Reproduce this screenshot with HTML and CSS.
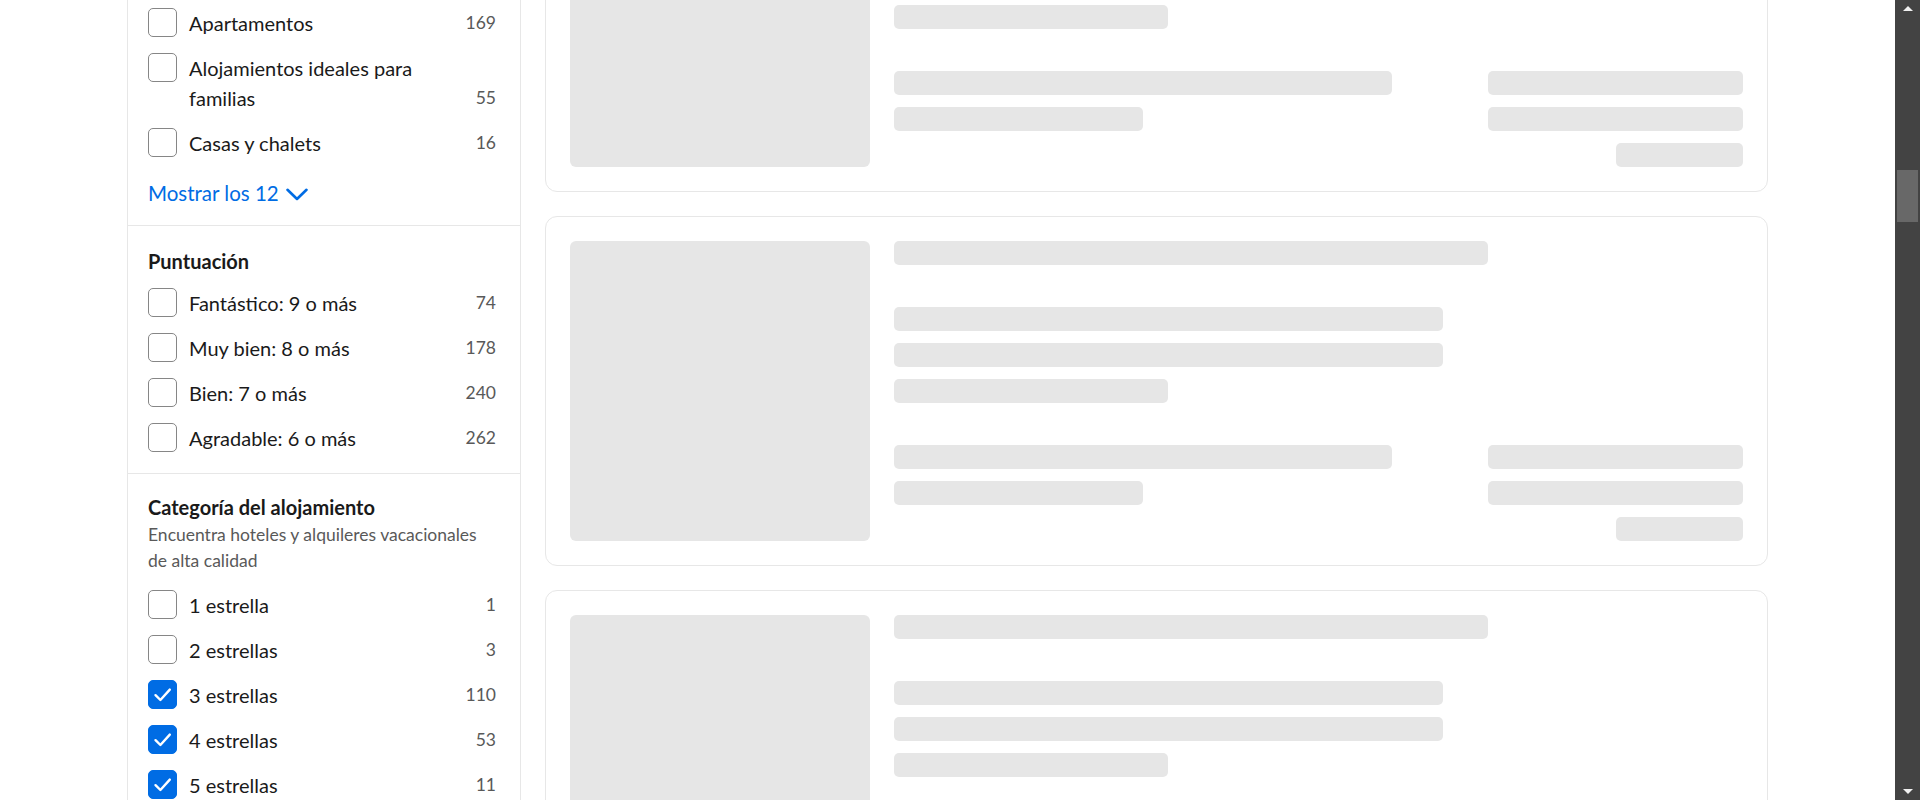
FILE: index.html
```html
<!DOCTYPE html>
<html lang="es">

<head>
    <meta charset="UTF-8">
    <meta name="viewport" content="width=device-width, initial-scale=1.0">
    <title>Resultados</title>
    <link rel="stylesheet" href="styles.css">
</head>

<body>
    <div class="page">
        <div class="viewport">
            <div class="layout">
                <!-- filtros -->
                <aside class="filters">
                    <section class="group group-first">
                        <ul class="options">
                            <li class="option">
                                <span class="box"></span>
                                <span class="label">Apartamentos</span>
                                <span class="count">169</span>
                            </li>
                            <li class="option">
                                <span class="box"></span>
                                <span class="label">Alojamientos ideales para familias</span>
                                <span class="count">55</span>
                            </li>
                            <li class="option">
                                <span class="box"></span>
                                <span class="label">Casas y chalets</span>
                                <span class="count">16</span>
                            </li>
                        </ul>
                        <button class="more">
                            Mostrar los 12
                            <svg width="22" height="13" viewBox="0 0 22 13">
                                <path d="M1.5 1.8 L11 11 L20.5 1.8" fill="none" stroke="#006ce4" stroke-width="2.6" stroke-linecap="round" stroke-linejoin="round" />
                            </svg>
                        </button>
                    </section>

                    <section class="group">
                        <h3 class="title">Puntuación</h3>
                        <ul class="options">
                            <li class="option">
                                <span class="box"></span>
                                <span class="label">Fantástico: 9 o más</span>
                                <span class="count">74</span>
                            </li>
                            <li class="option">
                                <span class="box"></span>
                                <span class="label">Muy bien: 8 o más</span>
                                <span class="count">178</span>
                            </li>
                            <li class="option">
                                <span class="box"></span>
                                <span class="label">Bien: 7 o más</span>
                                <span class="count">240</span>
                            </li>
                            <li class="option">
                                <span class="box"></span>
                                <span class="label">Agradable: 6 o más</span>
                                <span class="count">262</span>
                            </li>
                        </ul>
                    </section>

                    <section class="group group-category">
                        <h3 class="title">Categoría del alojamiento</h3>
                        <p class="hint">Encuentra hoteles y alquileres vacacionales de alta calidad</p>
                        <ul class="options">
                            <li class="option">
                                <span class="box"></span>
                                <span class="label">1 estrella</span>
                                <span class="count">1</span>
                            </li>
                            <li class="option">
                                <span class="box"></span>
                                <span class="label">2 estrellas</span>
                                <span class="count">3</span>
                            </li>
                            <li class="option">
                                <span class="box checked">
                                    <svg width="29" height="29" viewBox="0 0 29 29"><path d="M7.5 15.2 L12.4 20 L21.8 9.6" fill="none" stroke="#fff" stroke-width="2.4" stroke-linecap="round" stroke-linejoin="round" /></svg>
                                </span>
                                <span class="label">3 estrellas</span>
                                <span class="count">110</span>
                            </li>
                            <li class="option">
                                <span class="box checked">
                                    <svg width="29" height="29" viewBox="0 0 29 29"><path d="M7.5 15.2 L12.4 20 L21.8 9.6" fill="none" stroke="#fff" stroke-width="2.4" stroke-linecap="round" stroke-linejoin="round" /></svg>
                                </span>
                                <span class="label">4 estrellas</span>
                                <span class="count">53</span>
                            </li>
                            <li class="option">
                                <span class="box checked">
                                    <svg width="29" height="29" viewBox="0 0 29 29"><path d="M7.5 15.2 L12.4 20 L21.8 9.6" fill="none" stroke="#fff" stroke-width="2.4" stroke-linecap="round" stroke-linejoin="round" /></svg>
                                </span>
                                <span class="label">5 estrellas</span>
                                <span class="count">11</span>
                            </li>
                        </ul>
                    </section>
                </aside>

                <!-- resultados cargando -->
                <main class="results">
                    <div class="card">
                        <div class="photo"></div>
                        <div class="info">
                            <div class="line w-title"></div>
                            <div class="stack">
                                <div class="line w-mid"></div>
                                <div class="line w-mid"></div>
                                <div class="line w-short"></div>
                            </div>
                            <div class="bottom">
                                <div class="stack">
                                    <div class="line w-left"></div>
                                    <div class="line w-left-sm"></div>
                                </div>
                                <div class="stack price">
                                    <div class="line w-price"></div>
                                    <div class="line w-price"></div>
                                    <div class="line w-price-sm"></div>
                                </div>
                            </div>
                        </div>
                    </div>
                    <div class="card">
                        <div class="photo"></div>
                        <div class="info">
                            <div class="line w-title"></div>
                            <div class="stack">
                                <div class="line w-mid"></div>
                                <div class="line w-mid"></div>
                                <div class="line w-short"></div>
                            </div>
                            <div class="bottom">
                                <div class="stack">
                                    <div class="line w-left"></div>
                                    <div class="line w-left-sm"></div>
                                </div>
                                <div class="stack price">
                                    <div class="line w-price"></div>
                                    <div class="line w-price"></div>
                                    <div class="line w-price-sm"></div>
                                </div>
                            </div>
                        </div>
                    </div>
                    <div class="card">
                        <div class="photo"></div>
                        <div class="info">
                            <div class="line w-title"></div>
                            <div class="stack">
                                <div class="line w-mid"></div>
                                <div class="line w-mid"></div>
                                <div class="line w-short"></div>
                            </div>
                            <div class="bottom">
                                <div class="stack">
                                    <div class="line w-left"></div>
                                    <div class="line w-left-sm"></div>
                                </div>
                                <div class="stack price">
                                    <div class="line w-price"></div>
                                    <div class="line w-price"></div>
                                    <div class="line w-price-sm"></div>
                                </div>
                            </div>
                        </div>
                    </div>
                </main>
            </div>
        </div>

        <!-- barra de desplazamiento -->
        <div class="scrollbar">
            <span class="arrow arrow-up"></span>
            <div class="track">
                <div class="thumb"></div>
            </div>
            <span class="arrow arrow-down"></span>
        </div>
    </div>
</body>

</html>
```

FILE: styles.css
```css
* {
    box-sizing: border-box;
}

body,
ul,
p,
h3,
button {
    margin: 0;
    padding: 0;
}

body {
    font-family: Lato, "Liberation Sans", sans-serif;
    color: #1a1a1a;
    background: #fff;
    height: 800px;
    overflow: hidden;
}

.page {
    display: flex;
    height: 800px;
}

.viewport {
    flex: 1;
    overflow: hidden;
}

.layout {
    width: 1641px;
    margin: 0 auto;
    display: flex;
    gap: 24px;
    align-items: flex-start;
}

/* filtros */
.filters {
    width: 394px;
    flex: none;
    border-left: 1px solid #e7e7e7;
    border-right: 1px solid #e7e7e7;
}

.group {
    padding: 20px 24px 20px 20px;
    border-top: 1px solid #e7e7e7;
}

.group-first {
    border-top: none;
    padding-top: 8px;
    padding-bottom: 17px;
}

.title {
    font-size: 20px;
    line-height: 30px;
    font-weight: 700;
    margin-bottom: 12px;
}

.hint {
    font-size: 17.5px;
    line-height: 26px;
    color: #595959;
    margin-top: -13px;
    margin-bottom: 15px;
}

.group-category .title {
    margin-top: -2px;
}

.group-category .hint {
    margin-top: -12px;
    margin-bottom: 16px;
}

.options {
    list-style: none;
    display: flex;
    flex-direction: column;
    gap: 15px;
}

.option {
    display: flex;
    align-items: flex-start;
    gap: 12px;
}

.box {
    width: 29px;
    height: 29px;
    flex: none;
    border: 1px solid #868686;
    border-radius: 5px;
    background: #fff;
}

.box.checked {
    background: #006ce4;
    border-color: #006ce4;
}

.box svg {
    display: block;
    margin: -1px;
}

.label {
    flex: 1;
    font-size: 20px;
    line-height: 30px;
}

.count {
    align-self: flex-end;
    font-size: 17.5px;
    line-height: 30px;
    color: #595959;
    margin-left: 16px;
}

.more {
    margin-top: 20px;
    display: flex;
    align-items: center;
    gap: 7px;
    height: 30px;
    border: none;
    background: none;
    font-family: inherit;
    font-size: 20.5px;
    color: #006ce4;
    cursor: pointer;
}

.more svg {
    margin-top: 2px;
}

/* tarjetas */
.results {
    flex: 1;
    margin-top: -158px;
    display: flex;
    flex-direction: column;
    gap: 24px;
}

.card {
    display: flex;
    gap: 24px;
    padding: 24px;
    border: 1px solid #e7e7e7;
    border-radius: 12px;
}

.photo {
    width: 300px;
    height: 300px;
    flex: none;
    background: #e6e6e6;
    border-radius: 6px;
}

.info {
    flex: 1;
    display: flex;
    flex-direction: column;
    justify-content: space-between;
}

.stack {
    display: flex;
    flex-direction: column;
    gap: 12px;
}

.line {
    height: 24px;
    background: #e6e6e6;
    border-radius: 5px;
}

.w-title {
    width: 70%;
}

.w-mid {
    width: 549px;
}

.w-short {
    width: 274px;
}

.bottom {
    display: flex;
    justify-content: space-between;
    align-items: flex-start;
}

.w-left {
    width: 498px;
}

.w-left-sm {
    width: 249px;
}

.price {
    width: 255px;
    align-items: flex-end;
}

.w-price {
    width: 100%;
}

.w-price-sm {
    width: 127px;
}

/* barra de desplazamiento */
.scrollbar {
    width: 25px;
    flex: none;
    background: #434343;
    display: flex;
    flex-direction: column;
    align-items: center;
}

.arrow {
    width: 0;
    height: 0;
    border-left: 5px solid transparent;
    border-right: 5px solid transparent;
    margin: 6px 0;
}

.arrow-up {
    border-bottom: 5px solid #f0f0f0;
}

.arrow-down {
    border-top: 5px solid #f0f0f0;
}

.track {
    flex: 1;
    width: 100%;
    padding: 153px 2px 0;
}

.thumb {
    height: 52px;
    background: #686868;
}
```
